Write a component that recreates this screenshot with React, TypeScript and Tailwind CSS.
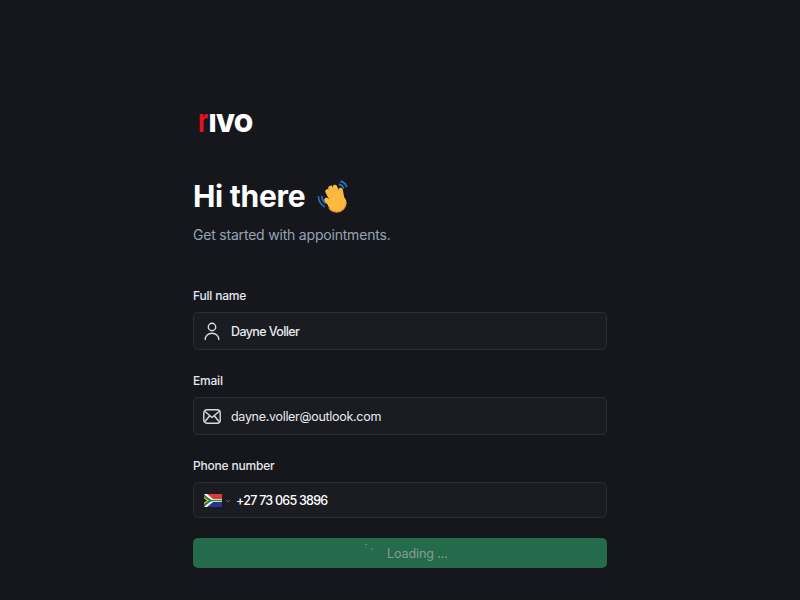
function WaveHand() {
  return (
    <svg width="36" height="36" viewBox="0 0 36 36" fill="none" className="shrink-0">
      {/* motion lines */}
      <path d="M24 3.500c2.500.3 4.500 2.200 5.500 5M22.500 6.500c1.800.2 3.200 1.500 4 3.500" stroke="#2a6cb0" strokeWidth="1.800" strokeLinecap="round" />
      <path d="M1.500 19c.2 3.800 2.500 7.500 5.800 9.500M4.800 18.500c.2 2.500 1.500 5 3.500 6.500" stroke="#2a6cb0" strokeWidth="1.800" strokeLinecap="round" />
      {/* palm and fingers */}
      <g stroke="#fbb93f" strokeWidth="4.600" strokeLinecap="round">
        <path d="M15 22l-4.500-8.500" />
        <path d="M18 20l-4.500-10" />
        <path d="M21.500 19l-3.500-10" />
        <path d="M25 20l-1.500-8" />
        <path d="M14 27l-4.500-5" />
      </g>
      <ellipse cx="20" cy="25" rx="9.500" ry="9" fill="#fbb93f" />
      <path d="M12 30c2 3 5 4.300 8.500 4 4.500-.4 8-4 8.500-8.500" stroke="#e8982a" strokeWidth="1.200" strokeLinecap="round" />
    </svg>
  );
}

function MailIcon() {
  return (
    <svg width="18" height="15" viewBox="0 0 18 15" fill="none" stroke="#d8dbe0" strokeWidth="1.400" strokeLinejoin="round">
      <rect x="0.800" y="0.800" width="16.400" height="13.400" rx="3" />
      <path d="M2 2.500l7 6 7-6M2 12.500l4.700-5.800M16 12.500l-4.700-5.800" />
    </svg>
  );
}

function UserIcon() {
  return (
    <svg width="16" height="19" viewBox="0 0 16 19" fill="none" stroke="#d8dbe0" strokeWidth="1.400" strokeLinecap="round">
      <circle cx="8" cy="5" r="3.700" />
      <path d="M1.200 17.500c0-3.800 3-6.300 6.800-6.300s6.800 2.500 6.800 6.300" />
    </svg>
  );
}

function SaFlag() {
  return (
    <svg width="18" height="13" viewBox="0 0 18 13" className="shrink-0">
      <rect width="18" height="6.500" fill="#de3b30" />
      <rect y="6.500" width="18" height="6.500" fill="#23358f" />
      <path d="M0 0l6.500 6.500L0 13z" fill="#111" />
      <path d="M0 0h3l6 5h9v3H9l-6 5H0l6.500-6.500z" fill="#fff" />
      <path d="M0 1l7.500 4.700H18v1.600H7.500L0 12V10l5-3.500L0 3z" fill="#1d8a55" />
      <path d="M0 3l5 3.500L0 10V8.500L2.800 6.500 0 4.500z" fill="#f3b82e" />
    </svg>
  );
}

function Field({ label, children, h = 'h-[38px]' }: { label: string; children: React.ReactNode; h?: string }) {
  return (
    <div className="flex flex-col gap-[8px]">
      <label className="text-[12px] leading-[16px] font-medium text-[#e6e8ec] tracking-[-0.2px]">{label}</label>
      <div className={`flex items-center ${h} rounded-[5px] border border-[#2b2e34] bg-[#1a1c21] text-[12.5px] leading-[18px] pt-[1px] text-[#e8eaee] tracking-[-0.3px]`}>
        {children}
      </div>
    </div>
  );
}

export default function App() {
  return (
    <div className="h-[600px] overflow-hidden bg-[#15171c] font-['Inter',sans-serif]">
      <div className="mx-auto w-[414px] pt-[107px]">
        <div className="flex items-baseline h-[28px] pl-[5px] text-[24.5px] leading-[26px] font-black tracking-[-0.3px]">
          <span className="inline-block w-[11px] origin-left scale-x-[0.75] text-[33px] font-bold text-[#e0121f]">r</span>
          <span className="text-white">IVO</span>
        </div>

        <div className="mt-[41px] flex items-center gap-[12px] h-[40px]">
          <h1 className="text-[30px] leading-[40px] font-bold text-white tracking-[-0.3px]">Hi there</h1>
          <WaveHand />
        </div>
        <p className="mt-[9px] text-[14px] leading-[20px] text-[#98a2b3] tracking-[-0.2px]">Get started with appointments.</p>

        <form className="mt-[43px] flex flex-col gap-[23px]">
          <Field label="Full name">
            <span className="w-[37px] flex justify-center shrink-0 -translate-x-[1px]"><UserIcon /></span>
            <span className="font-medium tracking-[-0.6px]">Dayne Voller</span>
          </Field>
          <Field label="Email">
            <span className="w-[37px] flex justify-center shrink-0 -translate-x-[1px]"><MailIcon /></span>
            <span>dayne.voller@outlook.com</span>
          </Field>
          <Field label="Phone number" h="h-[36px]">
            <span className="ml-[10px] flex items-center gap-[3px] w-[32px] shrink-0">
              <SaFlag />
              <svg width="6" height="4" viewBox="0 0 6 4" fill="none"><path d="M1 1l2 2 2-2" stroke="#6b7078" strokeWidth="0.8" /></svg>
            </span>
            <span className="font-medium text-white tracking-[-0.75px]">+27 73 065 3896</span>
          </Field>
        </form>

        <button className="mt-[20px] relative w-full h-[30px] rounded-[5px] bg-[#236b4b] text-[12.5px] tracking-[-0.1px] text-[#8a9c92] flex items-center pt-[3px]">
          <svg width="10" height="8" viewBox="0 0 10 8" className="absolute left-[171px] top-[5px]">
            <circle cx="2" cy="1.5" r="0.8" fill="#7fa08f" />
            <circle cx="2" cy="4" r="0.6" fill="#6f9482" />
            <circle cx="8" cy="6" r="0.8" fill="#7fa08f" />
          </svg>
          <span className="ml-[194px]">Loading ...</span>
        </button>
      </div>
    </div>
  );
}
